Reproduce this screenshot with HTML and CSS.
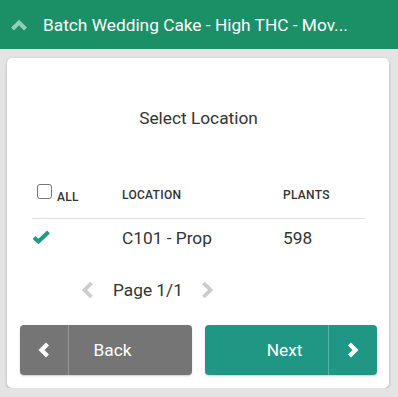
FILE: index.html
```html
<!DOCTYPE html>
<html lang="en">
<head>
    <meta charset="UTF-8">
    <meta name="viewport" content="width=device-width, initial-scale=1.0">
    <title>Move Plants</title>
    <link rel="stylesheet" href="styles.css">
</head>
<body>
    <div class="header">
        <svg class="header-icon" width="18" height="13" viewBox="0 0 18 13">
            <path d="M2.5 11 L9 4.5 L15.5 11" fill="none" stroke="#8fd1b5" stroke-width="4"/>
        </svg>
        <span class="header-title">Batch Wedding Cake - High THC - Mov...</span>
    </div>

    <div class="card">
        <h2>Select Location</h2>

        <!-- Locations table -->
        <div class="table">
            <div class="row head">
                <div class="col-check">
                    <span class="checkbox"></span>
                    <span class="all">ALL</span>
                </div>
                <div class="col-loc">LOCATION</div>
                <div class="col-plants">PLANTS</div>
            </div>
            <div class="row item">
                <div class="col-check">
                    <svg width="19" height="14" viewBox="0 0 19 14">
                        <path d="M2 7.5 L6.5 11.5 L16.5 2" fill="none" stroke="#1f9a84" stroke-width="4"/>
                    </svg>
                </div>
                <div class="col-loc">C101 - Prop</div>
                <div class="col-plants">598</div>
            </div>
        </div>

        <div class="pager">
            <svg width="14" height="18" viewBox="0 0 14 18">
                <path d="M11.5 2 L4.5 9 L11.5 16" fill="none" stroke="#cccccc" stroke-width="3.8"/>
            </svg>
            <span>Page 1/1</span>
            <svg width="14" height="18" viewBox="0 0 14 18">
                <path d="M2.5 2 L9.5 9 L2.5 16" fill="none" stroke="#cccccc" stroke-width="3.8"/>
            </svg>
        </div>

        <div class="buttons">
            <button class="btn back">
                <span class="btn-icon">
                    <svg width="14" height="16" viewBox="0 0 14 16">
                        <path d="M10.5 2 L4.5 8 L10.5 14" fill="none" stroke="#fff" stroke-width="4.2"/>
                    </svg>
                </span>
                <span class="btn-label">Back</span>
            </button>
            <button class="btn next">
                <span class="btn-label">Next</span>
                <span class="btn-icon">
                    <svg width="14" height="16" viewBox="0 0 14 16">
                        <path d="M3.5 2 L9.5 8 L3.5 14" fill="none" stroke="#fff" stroke-width="4.2"/>
                    </svg>
                </span>
            </button>
        </div>
    </div>
</body>
</html>
```

FILE: styles.css
```css
body {
    font-family: Roboto, "Liberation Sans", sans-serif;
    margin: 0;
    background-color: #e4e4e4;
    color: #333;
}
.header {
    height: 49px;
    background-color: #1b9066;
    display: flex;
    align-items: center;
    padding-left: 10px;
    color: white;
}
.header-icon {
    margin-right: 15px;
    margin-top: 0;
}
.header-title {
    font-size: 17.3px;
}
.card {
    margin: 9px 9px 0 7px;
    background-color: white;
    border-radius: 5px;
    box-shadow: 0 1px 3px rgba(0,0,0,0.25);
    padding: 1px 12px 13px 13px;
}
h2 {
    font-size: 17.3px;
    font-weight: normal;
    text-align: center;
    margin: 49px 0 0 0;
    line-height: 20px;
}
.table {
    margin: 53px 12px 0 12px;
}
.row {
    display: flex;
    align-items: center;
}
.head {
    height: 38px;
    border-bottom: 1px solid #e0e0e0;
    font-size: 12px;
    font-weight: 500;
    line-height: 14px;
    letter-spacing: 0.3px;
    align-items: flex-start;
    box-sizing: border-box;
}
.head .col-loc, .head .col-plants {
    padding-top: 7px;
}
.item {
    height: 38px;
    font-size: 17.3px;
}
.col-check {
    width: 90px;
    display: flex;
    align-items: flex-start;
}
.item .col-check {
    margin-top: -2px;
}
.checkbox {
    display: inline-block;
    width: 13px;
    height: 13px;
    border: 1px solid #767676;
    border-radius: 3px;
    margin: 3px 0 0 5px;
}
.all {
    margin: 9px 0 0 5px;
}
.col-loc {
    width: 161px;
}
.pager {
    display: flex;
    align-items: center;
    font-size: 17.3px;
    line-height: 20px;
    margin-top: 23px;
    padding-left: 60px;
}
.pager span {
    margin: 0 18px 0 19px;
}
.buttons {
    display: flex;
    gap: 13px;
    margin-top: 25px;
}
.btn {
    flex: 1;
    height: 50px;
    border: none;
    border-radius: 4px;
    color: white;
    font-family: Roboto, "Liberation Sans", sans-serif;
    font-size: 17.3px;
    display: flex;
    align-items: stretch;
    padding: 0;
    box-shadow: 0 1px 2px rgba(0,0,0,0.2);
    cursor: pointer;
}
.back {
    background-color: #757575;
}
.next {
    background-color: #209785;
}
.btn-icon {
    width: 48px;
    display: flex;
    align-items: center;
    justify-content: center;
}
.back .btn-icon {
    border-right: 1px solid rgba(255,255,255,0.25);
}
.next .btn-icon {
    border-left: 1px solid rgba(255,255,255,0.25);
}
.btn-label {
    flex: 1;
    display: flex;
    align-items: center;
    justify-content: center;
}
.back .btn-label {
    padding-right: 36px;
}
.next .btn-label {
    padding-left: 36px;
}
```
